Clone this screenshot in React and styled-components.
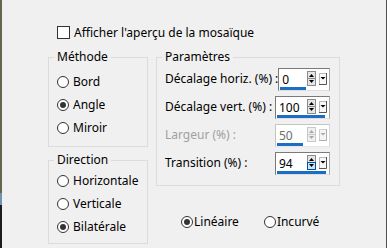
import styled, { createGlobalStyle } from 'styled-components';

const GlobalStyle = createGlobalStyle`
  html, body {
    margin: 0;
    padding: 0;
    background: #f0f0f0;
  }
  body {
    font-family: 'Noto Sans', 'Open Sans', sans-serif;
    font-size: 12px;
    color: #000;
  }
`;

const Screen = styled.div`
  width: 387px;
  height: 248px;
  box-sizing: border-box;
  overflow: hidden;
  padding: 26px 1px 0 2px;
  background:
    linear-gradient(to bottom, #66664f 0 193px, #6f93b3 193px 205px, #1c1c1c 205px) left top / 2px 100% no-repeat,
    linear-gradient(#4f4f4f, #4f4f4f) right top / 1px 100% no-repeat,
    #f0f0f0;
`;

const CheckRow = styled.label`
  display: flex;
  align-items: center;
  gap: 4px;
  height: 13px;
  margin-left: 55px;
  white-space: nowrap;
`;

const CheckBox = styled.span`
  width: 13px;
  height: 13px;
  box-sizing: border-box;
  border: 1px solid #333;
  background: #fff;
  flex: none;
`;

const Columns = styled.div`
  display: flex;
  gap: 8px;
  margin-top: 10px;
  padding-left: 46px;
`;

const Column = styled.div`
  display: flex;
  flex-direction: column;
  width: ${(p) => p.$w}px;
  gap: ${(p) => p.$gap || 0}px;
`;

const Group = styled.fieldset`
  margin: 0;
  padding: ${(p) => p.$pt || 0}px ${(p) => p.$pr || 5}px ${(p) => p.$pb || 0}px 5px;
  border: 1px solid #dcdcdc;
  height: ${(p) => p.$h}px;
  box-sizing: border-box;
  min-width: 0;
`;

const Legend = styled.legend`
  padding: 0 3px;
  line-height: 16px;
  font-size: 12px;
`;

const RadioList = styled.div`
  display: flex;
  flex-direction: column;
  padding-left: 3px;
`;

const RadioRow = styled.label`
  display: flex;
  align-items: center;
  height: 23px;
  gap: ${(p) => p.$gap ?? 4}px;
  white-space: nowrap;
`;

const RadioCircle = styled.span`
  width: 12px;
  height: 12px;
  box-sizing: border-box;
  border-radius: 50%;
  border: 1px solid #333;
  background: #fff;
  display: flex;
  align-items: center;
  justify-content: center;
  flex: none;

  &::after {
    content: '';
    display: ${(p) => (p.$checked ? 'block' : 'none')};
    width: 6px;
    height: 6px;
    border-radius: 50%;
    background: #333;
  }
`;

const ParamList = styled.div`
  display: flex;
  flex-direction: column;
  gap: 5px;
`;

const ParamRow = styled.div`
  display: flex;
  align-items: center;
  height: 23px;
  padding-left: 3px;
`;

const ParamLabel = styled.span`
  flex: 1;
  color: ${(p) => (p.$disabled ? '#a0a0a0' : '#000')};
  white-space: nowrap;
  margin-top: -3px;
`;

const SpinBox = styled.div`
  width: 55px;
  height: 23px;
  box-sizing: border-box;
  border: 1px solid;
  border-color: ${(p) =>
    p.$disabled ? '#c4c4c4 #dadada #e6e6e6 #c4c4c4' : '#7a7a7a #a9a9a9 #dedede #7a7a7a'};
  background: #fff;
  display: flex;
  flex-direction: column;
  padding: 1px 2px 0 1px;
`;

const SpinTop = styled.div`
  display: flex;
  align-items: center;
  height: 16px;
`;

const SpinValue = styled.span`
  flex: 1;
  padding: 3px 0 0 2px;
  line-height: 16px;
  color: ${(p) => (p.$disabled ? '#6d6d6d' : '#000')};
`;

const DropWrap = styled.span`
  display: flex;
  align-self: flex-end;
  margin: 0 0 1px 3px;
`;

const Bar = styled.div`
  height: 3px;
  margin-top: 1px;
  width: ${(p) => p.$w}px;
  background: #1b6ec2;
`;

const ModeRow = styled.div`
  display: flex;
  gap: 25px;
  margin-top: 24px;
  padding-left: 25px;
`;

const Spinner = ({ disabled, hot }) => {
  const stroke = disabled ? '#c8c8c8' : '#8a8a8a';
  const arrow = disabled ? '#a8a8a8' : '#000';
  return (
    <svg width="9" height="15" viewBox="0 0 9 15">
      <rect x="0.5" y="0.5" width="8" height="14" fill={disabled ? '#f0f0f0' : '#e5e5e5'} stroke={stroke} />
      {hot === 'down' && (
        <rect x="0.5" y="7.5" width="8" height="7" fill="#cce4f7" stroke="#005499" />
      )}
      <line x1="0" y1="7.5" x2="9" y2="7.5" stroke={hot === 'down' ? '#005499' : stroke} />
      <path d="M2 6h5L4.5 3z" fill={arrow} />
      <path d="M2 9h5l-2.5 3z" fill={arrow} />
    </svg>
  );
};

const DropButton = ({ disabled }) => (
  <svg width="8" height="12" viewBox="0 0 8 12">
    <rect x="0" y="0" width="8" height="12" fill={disabled ? '#f4f4f4' : '#f8f8f8'} />
    <path d="M0.5 12V0.5H7.5" fill="none" stroke={disabled ? '#d0d0d0' : '#b8b8b8'} />
    <path d="M7.5 0V11.5H0" fill="none" stroke={disabled ? '#b0b0b0' : '#555'} />
    <path d="M1.5 4h5L4 6.5z" fill={disabled ? '#a8a8a8' : '#000'} />
  </svg>
);

const params = [
  { label: 'Décalage horiz. (%) :', value: '0', bar: 26 },
  { label: 'Décalage vert. (%) :', value: '100', bar: 48 },
  { label: 'Largeur (%) :', value: '50', bar: 26, disabled: true },
  { label: 'Transition (%) :', value: '94', bar: 49, hot: 'down' },
];

const Radio = ({ label, checked, gap }) => (
  <RadioRow $gap={gap}>
    <RadioCircle $checked={checked} />
    <span>{label}</span>
  </RadioRow>
);

export default function App() {
  return (
    <Screen>
      <GlobalStyle />
      <CheckRow>
        <CheckBox />
        <span>Afficher l'aperçu de la mosaïque</span>
      </CheckRow>
      <Columns>
        <Column $w={100} $gap={5}>
          <Group $h={98} $pt={5}>
            <Legend>Méthode</Legend>
            <RadioList>
              <Radio label="Bord" />
              <Radio label="Angle" checked />
              <Radio label="Miroir" />
            </RadioList>
          </Group>
          <Group $h={92} $pt={1}>
            <Legend>Direction</Legend>
            <RadioList>
              <Radio label="Horizontale" />
              <Radio label="Verticale" />
              <Radio label="Bilatérale" checked />
            </RadioList>
          </Group>
        </Column>
        <Column $w={184}>
          <Group $h={137} $pt={3} $pr={9} $pb={10}>
            <Legend>Paramètres</Legend>
            <ParamList>
              {params.map((p) => (
                <ParamRow key={p.label}>
                  <ParamLabel $disabled={p.disabled}>{p.label}</ParamLabel>
                  <SpinBox $disabled={p.disabled}>
                    <SpinTop>
                      <SpinValue $disabled={p.disabled}>{p.value}</SpinValue>
                      <Spinner disabled={p.disabled} hot={p.hot} />
                      <DropWrap>
                        <DropButton disabled={p.disabled} />
                      </DropWrap>
                    </SpinTop>
                    <Bar $w={p.bar} />
                  </SpinBox>
                </ParamRow>
              ))}
            </ParamList>
          </Group>
          <ModeRow>
            <Radio label="Linéaire" checked gap={1} />
            <Radio label="Incurvé" gap={1} />
          </ModeRow>
        </Column>
      </Columns>
    </Screen>
  );
}
